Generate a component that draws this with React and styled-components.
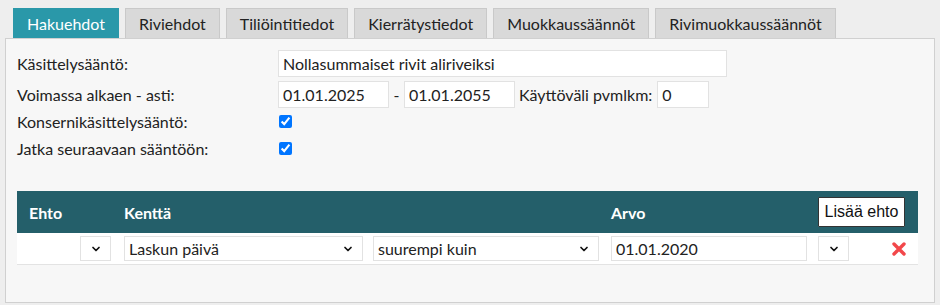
import React from 'react';
import styled, { createGlobalStyle } from 'styled-components';
import { ChevronDown } from 'lucide-react';

const GlobalStyle = createGlobalStyle`
  html, body {
    margin: 0;
    padding: 0;
    background: #eeeeee;
    font-family: Lato, "Noto Sans", sans-serif;
    color: #222;
  }
`;

const Page = styled.div`
  padding: 8px 5px 5px 5px;
  width: 930px;
`;

const TabBar = styled.div`
  display: flex;
  gap: 6px;
  padding-left: 8px;
`;

const Tab = styled.div`
  height: 30px;
  box-sizing: border-box;
  padding: 0 13px;
  display: flex;
  align-items: center;
  font-size: 16px;
  border: 1px solid ${(p) => (p.$active ? '#2a98a9' : '#c9c9c9')};
  border-bottom: none;
  background: ${(p) => (p.$active ? '#2a98a9' : '#d9d9d9')};
  color: ${(p) => (p.$active ? '#fff' : '#222')};
`;

const Panel = styled.div`
  border: 1px solid #d0d0d0;
  background: #f7f7f7;
  padding: 11px 16px 37px 11px;
`;

const Form = styled.div`
  display: flex;
  flex-direction: column;
`;

const FormRow = styled.div`
  display: flex;
  align-items: center;
  height: 27px;
  margin-bottom: ${(p) => (p.$spaced ? '4px' : '0')};
`;

const Label = styled.div`
  width: 261px;
  flex-shrink: 0;
  font-size: 16px;
`;

const TextInput = styled.input`
  box-sizing: border-box;
  width: ${(p) => p.$w}px;
  height: ${(p) => p.$h || 27}px;
  border: 1px solid #e2e2e2;
  background: #fff;
  font-family: Lato, "Noto Sans", sans-serif;
  font-size: 16px;
  color: #222;
  padding: 0 4px;
  outline: none;
`;

const Dash = styled.span`
  width: 15px;
  text-align: center;
  font-size: 16px;
`;

const InlineLabel = styled.span`
  font-size: 16px;
  margin: 0 5px 0 4px;
`;

const Check = styled.input`
  margin: 0 0 0 1px;
  width: 13px;
  height: 13px;
`;

const Table = styled.div`
  margin-top: 29px;
  width: 901px;
`;

const cols = '101px 249px 238px 207px 58px 1fr';

const HeaderRow = styled.div`
  display: grid;
  grid-template-columns: ${cols};
  align-items: center;
  height: 42px;
  background: #245f6a;
  color: #fff;
  font-weight: bold;
  font-size: 16px;
`;

const HeadCell = styled.div`
  padding-left: ${(p) => p.$pl ?? 6}px;
  grid-column: ${(p) => p.$span || 'auto'};
`;

const BodyRow = styled.div`
  display: grid;
  grid-template-columns: ${cols};
  align-items: center;
  height: 32px;
  background: #fff;
  border-bottom: 1px solid #e3e3e3;
  box-sizing: border-box;
`;

const Cell = styled.div`
  display: flex;
  justify-content: ${(p) => p.$justify || 'flex-start'};
  padding: 0 ${(p) => p.$pr ?? 0}px 0 ${(p) => p.$pl ?? 6}px;
`;

const SelectWrap = styled.div`
  position: relative;
  width: ${(p) => p.$w}px;
  height: 25px;
`;

const Select = styled.select`
  appearance: none;
  box-sizing: border-box;
  width: 100%;
  height: 100%;
  border: 1px solid #e2e2e2;
  background: #fff;
  font-family: Lato, "Noto Sans", sans-serif;
  font-size: 16px;
  color: #222;
  padding: 0 4px;
  outline: none;
`;

const Arrow = styled(ChevronDown)`
  position: absolute;
  right: 9px;
  top: 7px;
  pointer-events: none;
`;

const AddButton = styled.button`
  height: 30px;
  width: 87px;
  box-sizing: border-box;
  border: 1px solid #333;
  background: #fff;
  font-family: "Liberation Sans", Arial, sans-serif;
  font-size: 16px;
  color: #111;
  padding: 0;
  border-radius: 1px;
`;

const DropDown = ({ w, value, options = [] }) => (
  <SelectWrap $w={w}>
    <Select defaultValue={value}>
      {options.map((o) => (
        <option key={o}>{o}</option>
      ))}
    </Select>
    <Arrow size={12} strokeWidth={3.5} color="#111" />
  </SelectWrap>
);

const DeleteIcon = () => (
  <svg width="14" height="14" viewBox="0 0 14 14">
    <path d="M2 2 L12 12 M12 2 L2 12" stroke="#f2474a" strokeWidth="3.4" strokeLinecap="round" />
  </svg>
);

const tabs = ['Hakuehdot', 'Riviehdot', 'Tiliöintitiedot', 'Kierrätystiedot', 'Muokkaussäännöt', 'Rivimuokkaussäännöt'];

const App = () => {
  return (
    <Page>
      <GlobalStyle />
      <TabBar>
        {tabs.map((t, i) => (
          <Tab key={t} $active={i === 0}>{t}</Tab>
        ))}
      </TabBar>
      <Panel>
        <Form>
          <FormRow $spaced>
            <Label>Käsittelysääntö:</Label>
            <TextInput $w={449} defaultValue="Nollasummaiset rivit aliriveiksi" />
          </FormRow>
          <FormRow>
            <Label>Voimassa alkaen - asti:</Label>
            <TextInput $w={111} defaultValue="01.01.2025" />
            <Dash>-</Dash>
            <TextInput $w={111} defaultValue="01.01.2055" />
            <InlineLabel>Käyttöväli pvmlkm:</InlineLabel>
            <TextInput $w={52} defaultValue="0" />
          </FormRow>
          <FormRow>
            <Label>Konsernikäsittelysääntö:</Label>
            <Check type="checkbox" defaultChecked />
          </FormRow>
          <FormRow>
            <Label>Jatka seuraavaan sääntöön:</Label>
            <Check type="checkbox" defaultChecked />
          </FormRow>
        </Form>
        <Table>
          <HeaderRow>
            <HeadCell $pl={12}>Ehto</HeadCell>
            <HeadCell>Kenttä</HeadCell>
            <HeadCell />
            <HeadCell>Arvo</HeadCell>
            <HeadCell $span="span 2">
              <AddButton>Lisää ehto</AddButton>
            </HeadCell>
          </HeaderRow>
          <BodyRow>
            <Cell $justify="flex-end" $pr={7} $pl={0}>
              <DropDown w={31} options={['', 'ja', 'tai']} />
            </Cell>
            <Cell>
              <DropDown w={239} value="Laskun päivä" options={['Laskun päivä']} />
            </Cell>
            <Cell>
              <DropDown w={226} value="suurempi kuin" options={['suurempi kuin']} />
            </Cell>
            <Cell>
              <TextInput $w={196} $h={25} defaultValue="01.01.2020" />
            </Cell>
            <Cell>
              <DropDown w={31} options={['', '(', ')']} />
            </Cell>
            <Cell $justify="flex-end" $pr={12}>
              <DeleteIcon />
            </Cell>
          </BodyRow>
        </Table>
      </Panel>
    </Page>
  );
};

export default App;
